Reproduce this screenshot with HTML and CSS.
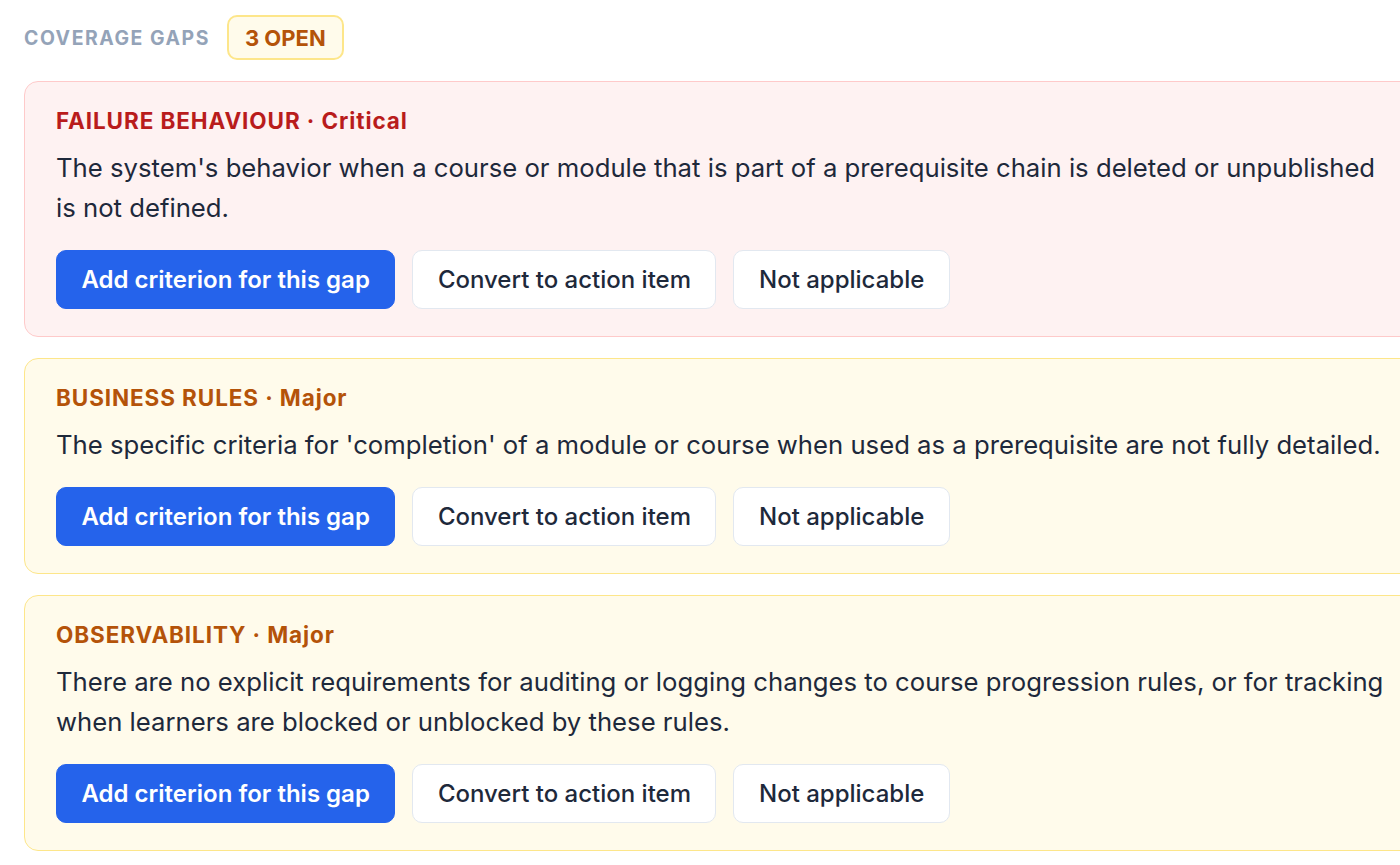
FILE: index.html
```html
<!DOCTYPE html>
<html lang="en">

<head>
  <meta charset="UTF-8">
  <meta name="viewport" content="width=device-width, initial-scale=1.0">
  <title>Coverage gaps</title>
  <link rel="stylesheet" href="styles.css">
</head>

<body>
  <div class="gaps">
    <div class="gaps-header">
      <span class="gaps-label">Coverage gaps</span>
      <span class="open-badge">3 OPEN</span>
    </div>

    <div class="gap-card critical">
      <div class="gap-title">FAILURE BEHAVIOUR · Critical</div>
      <p class="gap-text">The system's behavior when a course or module that is part of a prerequisite chain is deleted or unpublished is not defined.</p>
      <div class="gap-actions">
        <button class="btn btn-primary">Add criterion for this gap</button>
        <button class="btn">Convert to action item</button>
        <button class="btn">Not applicable</button>
      </div>
    </div>

    <div class="gap-card major">
      <div class="gap-title">BUSINESS RULES · Major</div>
      <p class="gap-text">The specific criteria for 'completion' of a module or course when used as a prerequisite are not fully detailed.</p>
      <div class="gap-actions">
        <button class="btn btn-primary">Add criterion for this gap</button>
        <button class="btn">Convert to action item</button>
        <button class="btn">Not applicable</button>
      </div>
    </div>

    <div class="gap-card major">
      <div class="gap-title">OBSERVABILITY · Major</div>
      <p class="gap-text">There are no explicit requirements for auditing or logging changes to course progression rules, or for tracking when learners are blocked or unblocked by these rules.</p>
      <div class="gap-actions">
        <button class="btn btn-primary">Add criterion for this gap</button>
        <button class="btn">Convert to action item</button>
        <button class="btn">Not applicable</button>
      </div>
    </div>
  </div>
</body>

</html>
```

FILE: styles.css
```css
html {
  overflow: hidden;
}

body {
  margin: 0;
  font-family: 'Inter', 'Noto Sans', sans-serif;
  background-color: #ffffff;
  color: #1e293b;
}

.gaps {
  padding: 15px 0 0 24px;
  width: 1410px;
  display: flex;
  flex-direction: column;
  gap: 21px;
}

.gaps-header {
  display: flex;
  align-items: center;
  gap: 17px;
}

.gaps-label {
  font-size: 19.4px;
  font-weight: 700;
  letter-spacing: 0.08em;
  text-transform: uppercase;
  color: #94a3b8;
}

.open-badge {
  box-sizing: border-box;
  height: 45px;
  padding: 0 16px;
  display: flex;
  align-items: center;
  font-size: 22px;
  font-weight: 700;
  color: #b45309;
  background-color: #fffbeb;
  border: 2px solid #fde68a;
  border-radius: 10px;
}

.gap-card {
  padding: 24px 31px 27px;
  border: 1.5px solid;
  border-radius: 14px;
}

.gap-card.critical {
  background-color: #fef2f2;
  border-color: #fecaca;
}

.gap-card.major {
  background-color: #fffbeb;
  border-color: #fde68a;
}

.gap-title {
  font-size: 22.5px;
  line-height: 30px;
  font-weight: 700;
  letter-spacing: 0.9px;
}

.critical .gap-title {
  color: #b91c1c;
}

.major .gap-title {
  color: #b45309;
}

.gap-text {
  margin: 12px 0 22px;
  font-size: 25.7px;
  line-height: 40px;
  color: #1e293b;
}

.gap-actions {
  display: flex;
  gap: 17px;
}

.btn {
  height: 59px;
  padding: 0 24.5px;
  font-family: inherit;
  font-size: 24px;
  font-weight: 500;
  color: #1e293b;
  background-color: #ffffff;
  border: 1.5px solid #e2e8f0;
  border-radius: 10px;
  cursor: pointer;
}

.btn-primary {
  font-weight: 600;
  color: #ffffff;
  background-color: #2563eb;
  border-color: #2563eb;
}
```
